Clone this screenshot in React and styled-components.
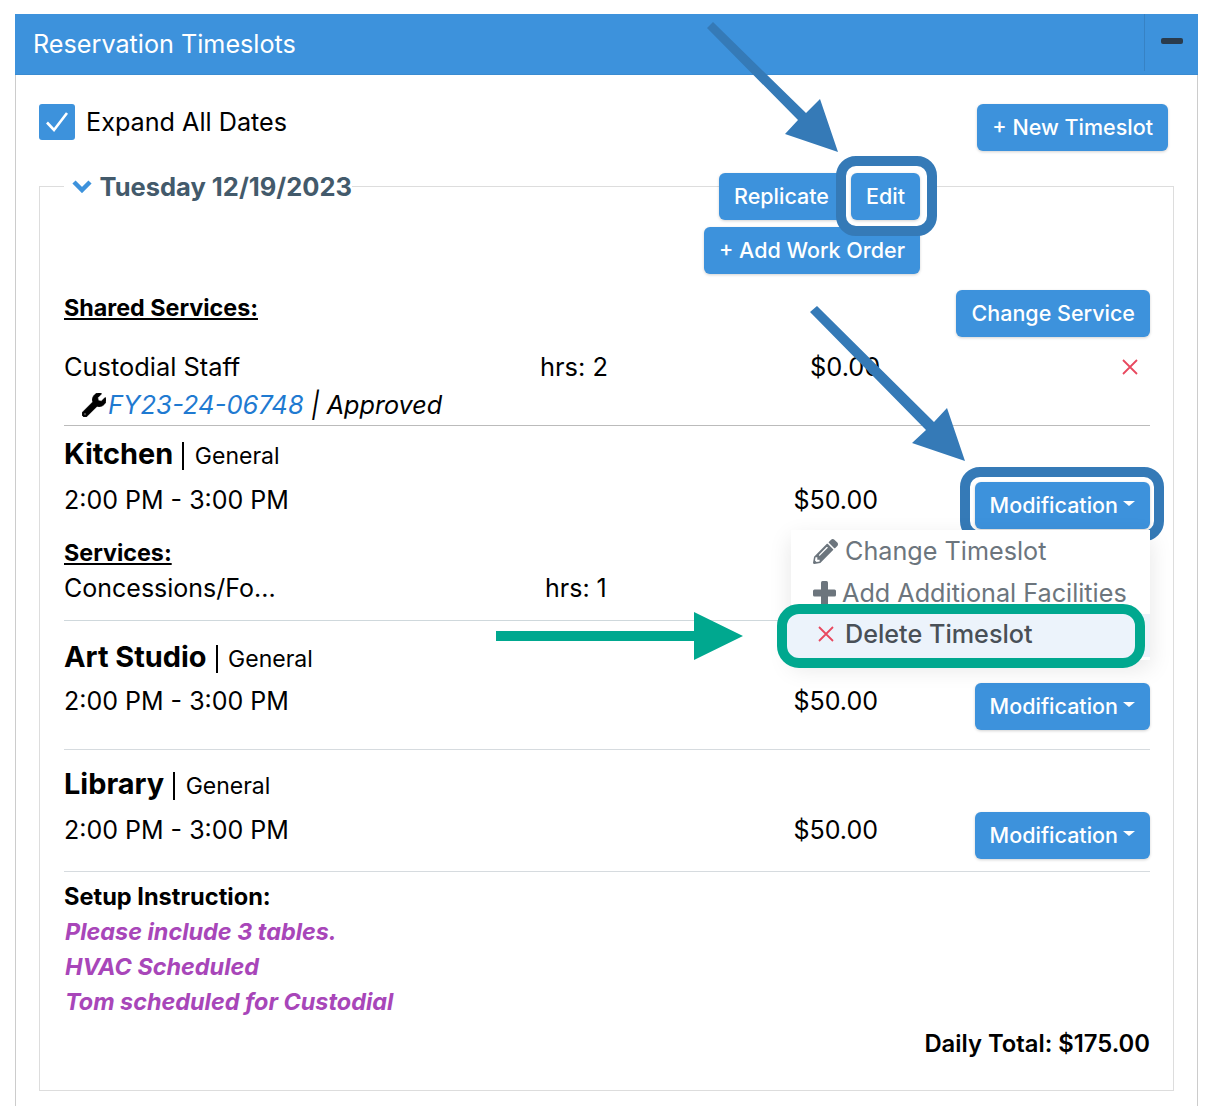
import React from "react";
import styled, { createGlobalStyle } from "styled-components";
import { FaPencilAlt, FaWrench } from "react-icons/fa";

const GlobalStyle = createGlobalStyle`
	html, body {
		margin: 0;
		height: 1106px;
		overflow: hidden;
		background: #fff;
		font-family: Inter, "Liberation Sans", sans-serif;
		color: #000;
	}
	* {
		box-sizing: border-box;
	}
`;

const Page = styled.div`
	position: relative;
	width: 1216px;
	height: 1106px;
	padding: 14px 18px 0 15px;
	overflow: hidden;
`;

const Panel = styled.section`
	height: 1110px;
	border: 1px solid #ccc;
	border-top: 0;
`;

const PanelHeader = styled.header`
	display: flex;
	justify-content: space-between;
	height: 61px;
	margin: 0 -1px;
	padding-left: 18px;
	background: #3d92dc;
	border-bottom: 1px solid #3a8bd1;
`;

const PanelTitle = styled.h2`
	margin: 0;
	font-size: 25.2px;
	font-weight: 400;
	line-height: 60px;
	color: #fff;
`;

const Collapse = styled.div`
	display: flex;
	align-items: center;
	justify-content: center;
	width: 54px;
	height: 57px;
	padding: 0 0 3px 1px;
	border-left: 1px solid #3782c4;
`;

const Minus = styled.span`
	width: 22px;
	height: 6px;
	border-radius: 2px;
	background: #2a3b4c;
`;

const PanelBody = styled.div`
	padding: 29px 23px 0;
`;

const TopRow = styled.div`
	display: flex;
	justify-content: space-between;
	align-items: flex-start;
	padding-right: 6px;
`;

const CheckLabel = styled.label`
	display: flex;
	align-items: center;
	gap: 11px;
	height: 36px;
	font-size: 25.2px;
`;

const CheckBox = styled.span`
	display: flex;
	align-items: center;
	justify-content: center;
	width: 36px;
	height: 36px;
	border-radius: 3px;
	background: #3d92dc;
`;

const Button = styled.button`
	display: inline-flex;
	align-items: center;
	position: relative;
	z-index: ${(props) => (props.$raised ? 2 : "auto")};
	height: 47px;
	padding: 0 15px 2px;
	border: 0;
	border-radius: 6px;
	background: #3d92dc;
	box-shadow: 0 1px 3px rgba(0, 0, 0, 0.18);
	color: #fff;
	font-family: inherit;
	font-size: 21.5px;
	font-weight: 500;
	white-space: nowrap;
`;

const Caret = styled.span`
	margin-left: 5px;
	margin-top: -3px;
	border-top: 5px solid #fff;
	border-left: 6px solid transparent;
	border-right: 6px solid transparent;
`;

const Ring = styled.span`
	position: absolute;
	z-index: 1;
	top: ${(props) => props.$top}px;
	right: ${(props) => props.$right}px;
	bottom: ${(props) => props.$bottom}px;
	left: ${(props) => props.$left}px;
	border: 10px solid #357ab7;
	border-radius: 20px;
	background: #fff;
`;

const ButtonAnchor = styled.span`
	position: relative;
	display: inline-flex;
`;

const DateBox = styled.div`
	height: 905px;
	margin-top: 35px;
	padding: 0 23px 0 24px;
	border: 1px solid #ddd;
`;

const DateHead = styled.div`
	display: flex;
	justify-content: space-between;
	align-items: flex-start;
	margin-top: -14px;
	padding-right: 230px;
`;

const DateLegend = styled.h3`
	display: flex;
	align-items: center;
	gap: 7.5px;
	margin: -1px 0 0;
	padding: 0 0 0 8px;
	background: #fff;
	color: #435a6b;
	font-size: 25.5px;
	font-weight: 700;
	line-height: 30px;
	svg {
		margin-top: -3px;
	}
`;

const ActionStack = styled.div`
	display: flex;
	flex-direction: column;
	align-items: flex-end;
	gap: 7px;
`;

const ActionRow = styled.div`
	display: flex;
	gap: 7px;
`;

const SharedHead = styled.div`
	display: flex;
	justify-content: space-between;
	align-items: flex-start;
	margin-top: 16px;
`;

const SectionTitle = styled.div`
	font-size: 23.3px;
	font-weight: 700;
	line-height: 34px;
	text-decoration: underline;
	margin-top: ${(props) => props.$top || 0}px;
`;

const ServiceRow = styled.div`
	display: grid;
	grid-template-columns: ${(props) => props.$hrsAt}px 270px 1fr 30px;
	align-items: center;
	font-size: ${(props) => props.$size}px;
	line-height: 30px;
	margin-top: ${(props) => props.$top || 0}px;
`;

const RemoveCell = styled.span`
	display: flex;
	justify-content: flex-end;
	padding-right: 12px;
`;

const WorkOrder = styled.div`
	display: flex;
	align-items: center;
	margin-top: 8px;
	padding-left: 18px;
	font-size: 25.6px;
	font-style: italic;
	line-height: 30px;
`;

const WorkOrderLink = styled.a`
	margin-left: 2px;
	color: #1f7ad1;
`;

const WorkOrderStatus = styled.span`
	font-size: 25.2px;
`;

const Divider = styled.hr`
	margin: ${(props) => props.$top}px 0 0;
	border: 0;
	border-top: 1px solid ${(props) => props.$color || "#bbb"};
`;

const Facility = styled.div`
	position: relative;
	padding-top: ${(props) => props.$pad}px;
`;

const FacilityTitle = styled.div`
	display: flex;
	align-items: baseline;
	line-height: 36px;
`;

const FacilityName = styled.span`
	font-size: 28.9px;
	font-weight: 700;
`;

const FacilityType = styled.span`
	margin-left: 9px;
	padding-left: 10.5px;
	border-left: 2px solid #000;
	font-size: 23px;
	line-height: 28px;
`;

const TimeRow = styled.div`
	display: flex;
	justify-content: space-between;
	align-items: flex-start;
	margin-top: ${(props) => props.$top}px;
`;

const TimeText = styled.span`
	margin-top: 3px;
	font-size: 25px;
	line-height: 30px;
`;

const Price = styled.span`
	position: absolute;
	right: 272px;
	margin-top: 3px;
	font-size: 25px;
	line-height: 30px;
`;

const Menu = styled.div`
	position: absolute;
	z-index: 3;
	top: 104px;
	right: 0;
	width: 359px;
	height: 130px;
	background: #fff;
	box-shadow: 0 8px 22px rgba(0, 0, 0, 0.1);
	color: #6c757d;
	font-size: 25.2px;
`;

const MenuItem = styled.div`
	display: flex;
	align-items: center;
	gap: ${(props) => props.$gap}px;
	height: 42px;
	padding-left: 22px;
`;

const DeleteItem = styled.div`
	position: relative;
	height: 43px;
	background: #ecf3fb;
`;

const DeleteRing = styled.span`
	position: absolute;
	top: -10px;
	right: 5px;
	bottom: -11px;
	left: -14px;
	border: 10px solid #00a88f;
	border-radius: 22px;
	background: #ecf3fb;
`;

const DeleteContent = styled.span`
	position: relative;
	top: -2px;
	display: flex;
	align-items: center;
	gap: 11px;
	height: 100%;
	padding-left: 27px;
	color: #495057;
	font-weight: 500;
`;

const SetupTitle = styled.div`
	margin-top: 7px;
	font-size: 23.6px;
	font-weight: 700;
	line-height: 35px;
`;

const SetupNote = styled.div`
	color: #a846b9;
	font-size: 23.4px;
	font-style: italic;
	font-weight: 700;
	line-height: 35px;
	margin-left: 1px;
`;

const DailyTotal = styled.div`
	margin-top: 7px;
	font-size: 23.8px;
	font-weight: 600;
	line-height: 36px;
	text-align: right;
`;

const Annotations = styled.svg`
	position: absolute;
	z-index: 5;
	top: 0;
	left: 0;
	pointer-events: none;
`;

const Cross = () => (
	<svg width="16" height="16" viewBox="0 0 16 16" fill="none">
		<path d="M1 1L15 15M15 1L1 15" stroke="#e8495f" strokeWidth="1.8" />
	</svg>
);

const ChevronDown = () => (
	<svg width="20" height="14" viewBox="0 0 20 14" fill="none">
		<path d="M2 3L10 11L18 3" stroke="#3d92dc" strokeWidth="4.5" />
	</svg>
);

const FatPlus = () => (
	<svg width="23" height="24" viewBox="0 0 23 24" fill="#6c757d">
		<rect x="8" y="0" width="7" height="24" rx="1.5" />
		<rect x="0" y="8.5" width="23" height="7" rx="1.5" />
	</svg>
);

const FacilityBlock = ({ name, type, pad, children }) => (
	<Facility $pad={pad}>
		<FacilityTitle>
			<FacilityName>{name}</FacilityName>
			<FacilityType>{type}</FacilityType>
		</FacilityTitle>
		{children}
	</Facility>
);

export default function App() {
	return (
		<Page>
			<GlobalStyle />
			<Panel>
				<PanelHeader>
					<PanelTitle>Reservation Timeslots</PanelTitle>
					<Collapse>
						<Minus />
					</Collapse>
				</PanelHeader>
				<PanelBody>
					<TopRow>
						<CheckLabel>
							<CheckBox>
								<svg width="26" height="22" viewBox="0 0 26 22" fill="none">
									<path d="M3 11.5L10 19L23 2" stroke="#fff" strokeWidth="2.6" />
								</svg>
							</CheckBox>
							Expand All Dates
						</CheckLabel>
						<Button>+ New Timeslot</Button>
					</TopRow>
					<DateBox>
						<DateHead>
							<DateLegend>
								<ChevronDown />
								Tuesday 12/19/2023
							</DateLegend>
							<ActionStack>
								<ActionRow>
									<Button>Replicate</Button>
									<ButtonAnchor>
										<Ring $top={-17} $right={-17} $bottom={-16} $left={-15} />
										<Button $raised>Edit</Button>
									</ButtonAnchor>
								</ActionRow>
								<Button>+ Add Work Order</Button>
							</ActionStack>
						</DateHead>
						<SharedHead>
							<SectionTitle $top={1}>Shared Services:</SectionTitle>
							<Button>Change Service</Button>
						</SharedHead>
						<ServiceRow $hrsAt={476} $size={25.4} $top={15}>
							<span>Custodial Staff</span>
							<span>hrs: 2</span>
							<span>$0.00</span>
							<RemoveCell>
								<Cross />
							</RemoveCell>
						</ServiceRow>
						<WorkOrder>
							<FaWrench size={24} stroke="currentColor" strokeWidth={20} />
							<WorkOrderLink>FY23-24-06748</WorkOrderLink>
							&nbsp;|&nbsp;
							<WorkOrderStatus>Approved</WorkOrderStatus>
						</WorkOrder>
						<Divider $top={5} />
						<FacilityBlock name="Kitchen" type="General" pad={10}>
							<TimeRow $top={10}>
								<TimeText>2:00 PM - 3:00 PM</TimeText>
								<Price>$50.00</Price>
								<ButtonAnchor>
									<Ring $top={-15} $right={-14} $bottom={-12} $left={-15} />
									<Button $raised>
										Modification
										<Caret />
									</Button>
								</ButtonAnchor>
							</TimeRow>
							<Menu>
								<MenuItem $gap={7}>
									<FaPencilAlt size={25} />
									Change Timeslot
								</MenuItem>
								<MenuItem $gap={6}>
									<FatPlus />
									Add Additional Facilities
								</MenuItem>
								<DeleteItem>
									<DeleteRing />
									<DeleteContent>
										<Cross />
										Delete Timeslot
									</DeleteContent>
								</DeleteItem>
							</Menu>
						</FacilityBlock>
						<SectionTitle $top={7}>Services:</SectionTitle>
						<ServiceRow $hrsAt={481} $size={25} $top={3}>
							<span>Concessions/Fo...</span>
							<span>hrs: 1</span>
						</ServiceRow>
						<Divider $top={17} $color="#cfd8dc" />
						<FacilityBlock name="Art Studio" type="General" pad={18}>
							<TimeRow $top={8}>
								<TimeText>2:00 PM - 3:00 PM</TimeText>
								<Price>$50.00</Price>
								<Button>
									Modification
									<Caret />
								</Button>
							</TimeRow>
						</FacilityBlock>
						<Divider $top={19} $color="#d6dbdf" />
						<FacilityBlock name="Library" type="General" pad={16}>
							<TimeRow $top={10}>
								<TimeText>2:00 PM - 3:00 PM</TimeText>
								<Price>$50.00</Price>
								<Button>
									Modification
									<Caret />
								</Button>
							</TimeRow>
						</FacilityBlock>
						<Divider $top={12} $color="#d6dbdf" />
						<SetupTitle>Setup Instruction:</SetupTitle>
						<SetupNote>Please include 3 tables.</SetupNote>
						<SetupNote>HVAC Scheduled</SetupNote>
						<SetupNote>Tom scheduled for Custodial</SetupNote>
						<DailyTotal>Daily Total: $175.00</DailyTotal>
					</DateBox>
				</PanelBody>
			</Panel>
			<Annotations width="1216" height="1106" viewBox="0 0 1216 1106">
				<polygon
					points="713,22 707,28 798,120 785,134 838,152 820,99 806,113"
					fill="#357ab7"
				/>
				<polygon
					points="817,306 810,312 926,430 912,443 965,461 947,408 934,422"
					fill="#357ab7"
				/>
				<polygon
					points="496,631 694,631 694,612 743,636 694,660 694,641 496,641"
					fill="#00a88f"
				/>
			</Annotations>
		</Page>
	);
}
